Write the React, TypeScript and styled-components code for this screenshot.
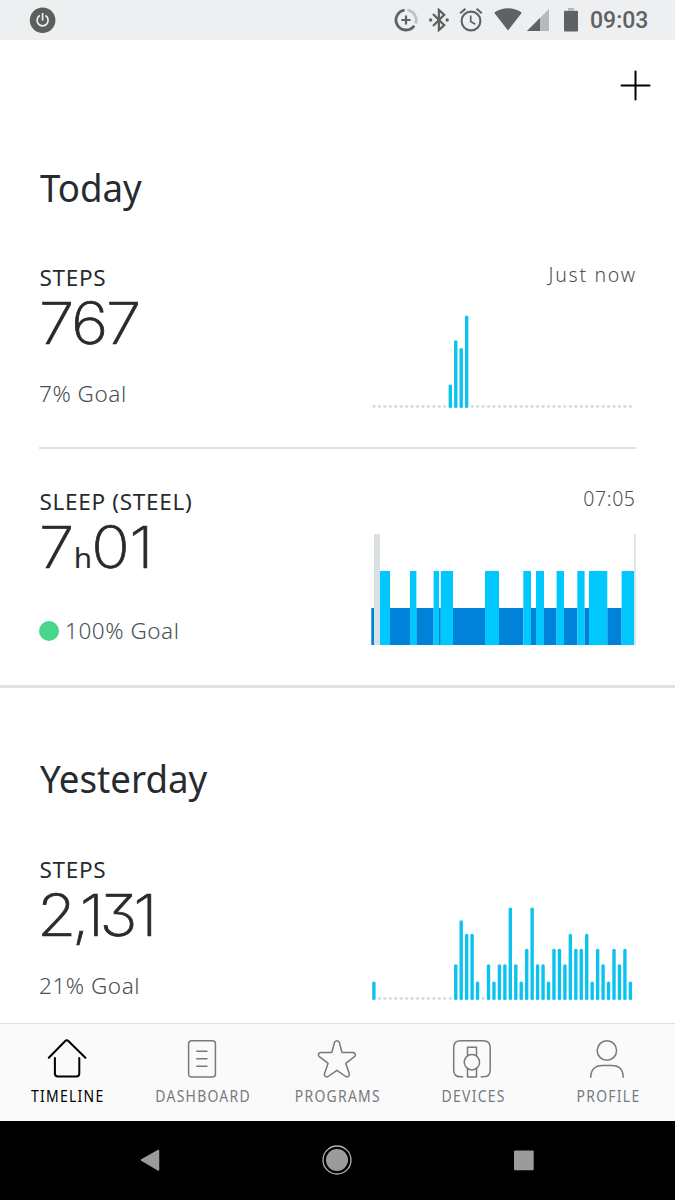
import React from 'react';
import styled, { createGlobalStyle } from 'styled-components';

const GlobalStyle = createGlobalStyle`
  * { box-sizing: border-box; }
  body { margin: 0; background: #fff; }
  svg { display: block; flex: none; }
`;

const Screen = styled.div`
  width: 675px;
  height: 1200px;
  display: flex;
  flex-direction: column;
  overflow: hidden;
  background: #fff;
  color: #262b2f;
  font-family: 'Noto Sans', sans-serif;
`;

const StatusBar = styled.header`
  height: 40px;
  flex: none;
  display: flex;
  align-items: center;
  padding: 0 26px 0 29px;
  background: #eeeff1;
`;

const StatusIcons = styled.div`
  display: flex;
  align-items: center;
  margin-left: auto;
`;

const Clock = styled.span`
  width: 59px;
  margin-left: 12px;
  font: 500 23px/43px Roboto, sans-serif;
  color: #5f6162;
  white-space: nowrap;
`;

const Toolbar = styled.div`
  height: 90px;
  flex: none;
  display: flex;
  justify-content: flex-end;
  align-items: center;
  padding-right: 24px;
`;

const Feed = styled.main`
  flex: 1;
  min-height: 0;
  overflow: hidden;
`;

const Day = styled.section<{ $top: number }>`
  padding: ${(p) => p.$top}px 39px 0;

  & + & {
    border-top: 3px solid #dfe1e4;
  }
`;

const DayTitle = styled.h2<{ $gap: number }>`
  margin: 0 0 ${(p) => p.$gap}px;
  padding-left: 1px;
  font-size: 39px;
  font-weight: 400;
  line-height: 48px;
  transform: scaleX(0.94);
  transform-origin: left;
`;

const Card = styled.article<{ $pad?: string }>`
  display: flex;
  justify-content: space-between;
  padding: ${(p) => p.$pad ?? '0 0 38px'};

  & + & {
    border-top: 2px solid #dfe1e4;
  }
`;

const Summary = styled.div`
  display: flex;
  flex-direction: column;
  padding-top: 1px;
`;

const Label = styled.div`
  padding-left: 0.5px;
  font-size: 22.5px;
  line-height: 30px;
  letter-spacing: 0.7px;
  white-space: nowrap;
`;

const Value = styled.div<{ $track?: number; $shift?: number }>`
  height: 58px;
  margin-left: ${(p) => p.$shift ?? 0}px;
  font-family: Inter, sans-serif;
  font-size: 58px;
  font-weight: 200;
  line-height: 60px;
  letter-spacing: ${(p) => p.$track ?? 0}px;
  font-feature-settings: 'cv09';
  -webkit-text-stroke: 0.7px currentColor;
  transform: scaleX(1.1);
  transform-origin: left;
  white-space: nowrap;
`;

const Unit = styled.small`
  font-family: 'Noto Sans', sans-serif;
  font-size: 27px;
  font-weight: 400;
  -webkit-text-stroke: 0;
`;

const Goal = styled.div<{ $gap: number }>`
  display: flex;
  align-items: center;
  gap: 6px;
  margin-top: ${(p) => p.$gap}px;
  font-size: 22.5px;
  font-weight: 300;
  line-height: 30px;
  letter-spacing: 0.55px;
  color: #4b5055;
  white-space: nowrap;
`;

const Dot = styled.i`
  width: 20px;
  height: 20px;
  border-radius: 50%;
  background: #48d58c;
`;

const Aside = styled.div`
  width: 265px;
  display: flex;
  flex-direction: column;
  align-items: flex-end;
`;

const Time = styled.time<{ $track: number }>`
  height: 26px;
  font-size: 19.5px;
  font-weight: 300;
  line-height: 25px;
  letter-spacing: ${(p) => p.$track}px;
  margin-right: ${(p) => 1 - p.$track}px;
  color: #4b5055;
`;

const TabBar = styled.nav`
  height: 98px;
  flex: none;
  display: grid;
  grid-template-columns: repeat(5, 1fr);
  border-top: 1.5px solid #dcdee0;
  background: #fafafb;
`;

const Tab = styled.a<{ $active?: boolean }>`
  display: flex;
  flex-direction: column;
  align-items: center;
  padding-top: 15px;
  color: ${(p) => (p.$active ? '#000' : '#76797d')};

  svg {
    margin-right: 0.5px;
  }

  span {
    margin-top: 6px;
    margin-right: -1.4px;
    font-size: 15.5px;
    line-height: 23px;
    letter-spacing: 1.4px;
    transform: scaleX(0.9);
  }
`;

const SystemBar = styled.footer`
  height: 79px;
  flex: none;
  display: flex;
  justify-content: center;
  gap: 157px;
  align-items: center;
  padding: 0 1px 1px 0;
  background: #000;
`;

const STEP = 5.457;

function StepsChart({ bars, height }: { bars: Record<number, number>; height: number }) {
  return (
    <svg width="265" height={height} viewBox={`0 0 265 ${height}`}>
      {Array.from({ length: 48 }, (_, i) => {
        const x = 2.9 + i * STEP;
        const h = bars[i];
        return h ? (
          <rect key={i} x={x - 1.7} y={height - h} width="3.4" height={h} rx="1.5" fill="#0cc3f0" />
        ) : (
          <circle key={i} cx={x} cy={height - 1.7} r="1.6" fill="#d9dcdf" />
        );
      })}
    </svg>
  );
}

type Phase = 'deep' | 'light' | 'awake';
const PHASES: Record<Phase, { h: number; fill: string }> = {
  deep: { h: 37, fill: '#0082d9' },
  light: { h: 74, fill: '#00c8ff' },
  awake: { h: 111, fill: '#dadfe1' },
};

const NIGHT: [Phase, number, number][] = [
  ['deep', 0.3, 3],
  ['awake', 3, 9],
  ['light', 9, 19],
  ['deep', 19, 39],
  ['light', 39, 45.4],
  ['deep', 45.4, 62.6],
  ['light', 62.6, 68],
  ['deep', 68, 69.8],
  ['light', 69.8, 82],
  ['deep', 82, 114],
  ['light', 114, 128],
  ['deep', 128, 152.3],
  ['light', 152.3, 160],
  ['deep', 160, 165],
  ['light', 165, 173],
  ['deep', 173, 185.6],
  ['light', 185.6, 193],
  ['deep', 193, 206.3],
  ['light', 206.3, 213.6],
  ['deep', 213.6, 218],
  ['light', 218, 236.3],
  ['deep', 236.3, 250.6],
  ['light', 250.6, 263],
  ['awake', 263, 264.7],
];

function SleepChart() {
  return (
    <svg width="265" height="111" viewBox="0 0 265 111">
      {NIGHT.map(([phase, from, to]) => (
        <rect key={from} x={from} y={111 - PHASES[phase].h} width={to - from} height={PHASES[phase].h} fill={PHASES[phase].fill} />
      ))}
    </svg>
  );
}

const ChartSlot = styled.div<{ $gap: number }>`
  margin-top: ${(p) => p.$gap}px;
`;

const TODAY = { 14: 23.5, 15: 67.7, 16: 60, 17: 92.4 };

const LEVELS = [0, 18.4, 35.7, 51.3, 66.3, 79.8, 92.4];
const YESTERDAY = Object.fromEntries(
  '100000000000000254410212262136221332433413213231'
    .split('')
    .map((level, i) => [i, LEVELS[Number(level)]])
);

const GREY = '#5f6162';

function PowerIcon() {
  return (
    <svg width="27" height="27" viewBox="0 0 27 27" fill="none">
      <circle cx="13.6" cy="13.2" r="12.8" fill="#5d5f5e" />
      <path d="M10.8 8.6a5.5 5.5 0 1 0 5.6 0M13.6 6v7.6" stroke="#eeeff1" strokeWidth="1.7" />
    </svg>
  );
}

function DataSaverIcon() {
  return (
    <svg width="24" height="24" viewBox="0 0 24 24" fill="none" stroke={GREY}>
      <path d="M13.4 2.1a10 10 0 0 1 8.1 13.5" stroke="#bfc1c2" strokeWidth="2.8" />
      <path d="M10.6 2.1a10 10 0 1 0 9.6 15.6" strokeWidth="2.8" />
      <path d="M12 7.4v9.2M7.4 12h9.2" strokeWidth="2.2" />
    </svg>
  );
}

function BluetoothIcon() {
  return (
    <svg width="22" height="24" viewBox="0 0 22 24" fill="none" stroke={GREY} strokeWidth="2.3">
      <path d="M5 6l11.2 11.2L10.9 22V2l5.3 4.8L5 18" />
      <circle cx="2.6" cy="12" r="1.7" fill={GREY} stroke="none" />
      <circle cx="19.2" cy="12" r="1.7" fill={GREY} stroke="none" />
    </svg>
  );
}

function AlarmIcon() {
  return (
    <svg width="24" height="24" viewBox="0 0 24 24" fill="none" stroke={GREY} strokeWidth="2.1">
      <circle cx="12" cy="13" r="9.4" />
      <path d="M11.7 7.6v6l4.6 2.7" strokeWidth="1.7" />
      <path d="M1.2 5.2l5.2-4.4M22.8 5.2l-5.2-4.4" />
    </svg>
  );
}

function WifiIcon() {
  return (
    <svg width="28" height="24" viewBox="0 0 28 24">
      <path d="M14 22.500L.2 4.800C4 1.800 8.600.2 14 .2s10 1.600 13.800 4.600z" fill={GREY} />
    </svg>
  );
}

function SignalIcon() {
  return (
    <svg width="22" height="24" viewBox="0 0 22 24">
      <path d="M0 23L22 1v22z" fill="#b7b9ba" />
      <path d="M0 23L13 10v13z" fill={GREY} />
    </svg>
  );
}

function BatteryIcon() {
  return (
    <svg width="14" height="24" viewBox="0 0 14 24">
      <path d="M4 0h6v2.500h4V5H0V2.500h4z" fill="#b7b9ba" />
      <rect y="3" width="14" height="20.500" rx="1" fill={GREY} />
    </svg>
  );
}

function TabIcon({ children, width = 1.5 }: { children: React.ReactNode; width?: number }) {
  return (
    <svg width="40" height="40" viewBox="0 0 40 40" fill="none" stroke="currentColor" strokeWidth={width} strokeLinecap="round" strokeLinejoin="round">
      {children}
    </svg>
  );
}

const Gap = styled.span<{ $w: number }>`
  width: ${(p) => p.$w}px;
`;

export default function App() {
  return (
    <Screen>
      <GlobalStyle />
      <StatusBar>
        <PowerIcon />
        <StatusIcons>
          <DataSaverIcon />
          <Gap $w={10} />
          <BluetoothIcon />
          <Gap $w={9} />
          <AlarmIcon />
          <Gap $w={11} />
          <WifiIcon />
          <Gap $w={5} />
          <SignalIcon />
          <Gap $w={15} />
          <BatteryIcon />
          <Clock>09:03</Clock>
        </StatusIcons>
      </StatusBar>
      <Toolbar>
        <svg width="31" height="31" viewBox="0 0 31 31" stroke="#000" strokeWidth="2" strokeLinecap="round">
          <path d="M15.500 1.500v28M1.500 15.500h28" />
        </svg>
      </Toolbar>
      <Feed>
        <Day $top={33}>
          <DayTitle $gap={51}>Today</DayTitle>
          <Card>
            <Summary>
              <Label>STEPS</Label>
              <Value $track={-2}>767</Value>
              <Goal $gap={28}>7% Goal</Goal>
            </Summary>
            <Aside>
              <Time $track={1.7}>Just now</Time>
              <ChartSlot $gap={27}>
                <StepsChart bars={TODAY} height={93} />
              </ChartSlot>
            </Aside>
          </Card>
          <Card $pad="37px 0 39px">
            <Summary>
              <Label>SLEEP (STEEL)</Label>
              <Value $track={-0.6}>
                7<Unit>h</Unit>01
              </Value>
              <Goal $gap={41}>
                <Dot />
                100% Goal
              </Goal>
            </Summary>
            <Aside>
              <Time $track={0.6}>07:05</Time>
              <ChartSlot $gap={22}>
                <SleepChart />
              </ChartSlot>
            </Aside>
          </Card>
        </Day>
        <Day $top={66}>
          <DayTitle $gap={52}>Yesterday</DayTitle>
          <Card>
            <Summary>
              <Label>STEPS</Label>
              <Value $track={-4} $shift={-2}>2,131</Value>
              <Goal $gap={28}>21% Goal</Goal>
            </Summary>
            <Aside>
              <ChartSlot $gap={53}>
                <StepsChart bars={YESTERDAY} height={93} />
              </ChartSlot>
            </Aside>
          </Card>
        </Day>
      </Feed>
      <TabBar>
        <Tab $active>
          <TabIcon width={2}>
            <path d="M1.800 18.700L18 2.200q1.800-1.800 3.600 0L38.400 18.700M7.900 18.900v15.600q0 3.100 3.100 3.100h18.200q3.100 0 3.100-3.100V18.900" />
          </TabIcon>
          <span>TIMELINE</span>
        </Tab>
        <Tab>
          <TabIcon>
            <rect x="6.600" y="1.700" width="26.800" height="36.300" rx="3" />
            <path d="M14.800 12.300h10.200M14.800 19.700h10.200M14.800 27.300h10.200" />
          </TabIcon>
          <span>DASHBOARD</span>
        </Tab>
        <Tab>
          <TabIcon>
            <path d="M17.500 3.300Q19.900.2 22.300 3.300L24.900 13.400L36.500 13.500Q39.500 15 37.800 17.400L28.700 24.300L32.500 35.200Q32 38.800 28.700 37.500L19.900 31.300L11.100 37.500Q7.800 38.800 7.300 35.200L11.100 24.300L2 17.400Q.3 15 3.300 13.500L14.900 13.400Z" />
          </TabIcon>
          <span>PROGRAMS</span>
        </Tab>
        <Tab>
          <TabIcon>
            <path d="M10.600 37.800H8.500Q1.700 37.800 1.700 31V8.500Q1.700 1.700 8.500 1.700h22.900Q38.200 1.700 38.200 8.500V31Q38.200 37.800 31.400 37.800h-2.100" />
            <path d="M15.500 16.400V8.300h9v8.100M15.500 30v8h9v-8" />
            <circle cx="19.900" cy="23.200" r="7.700" />
          </TabIcon>
          <span>DEVICES</span>
        </Tab>
        <Tab>
          <TabIcon>
            <circle cx="19.900" cy="11.500" r="9.700" />
            <path d="M3.800 38.300C3.800 30.500 8 26.400 15.500 26.400h9C32 26.400 36.200 30.500 36.200 38.300" />
          </TabIcon>
          <span>PROFILE</span>
        </Tab>
      </TabBar>
      <SystemBar>
        <svg width="30" height="30" viewBox="0 0 30 30">
          <path d="M6.500 15L23.500 5.500v19.500z" fill="#9b9b9b" stroke="#9b9b9b" strokeWidth="1.500" strokeLinejoin="round" />
        </svg>
        <svg width="30" height="30" viewBox="0 0 30 30">
          <circle cx="15" cy="15" r="14" fill="none" stroke="#b4b4b4" strokeWidth="1.300" />
          <circle cx="15" cy="15" r="11" fill="#9b9b9b" />
        </svg>
        <svg width="30" height="30" viewBox="0 0 30 30">
          <rect x="5" y="5.500" width="19.700" height="19.700" rx="1" fill="#9b9b9b" />
        </svg>
      </SystemBar>
    </Screen>
  );
}
